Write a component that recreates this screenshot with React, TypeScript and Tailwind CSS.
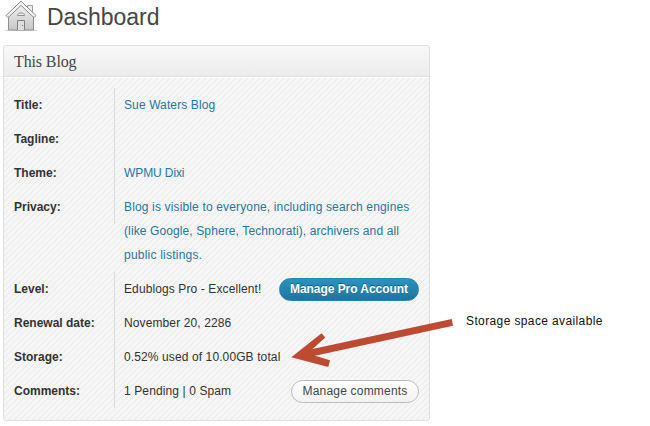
type Row = {
  label: string
  lines: string[]
  tracking?: string
  link?: boolean
  action?: string
  primary?: boolean
}

const rows: Row[] = [
  { label: 'Title:', lines: ['Sue Waters Blog'], link: true },
  { label: 'Tagline:', lines: [], link: true },
  { label: 'Theme:', lines: ['WPMU Dixi'], link: true, tracking: 'tracking-[-0.1px]' },
  {
    label: 'Privacy:',
    lines: [
      'Blog is visible to everyone, including search engines',
      '(like Google, Sphere, Technorati), archivers and all',
      'public listings.',
    ],
    link: true,
    tracking: 'tracking-[0.15px] [&>p:nth-child(2)]:tracking-[0.11px] [&>p:nth-child(3)]:tracking-[0.22px]',
  },
  { label: 'Level:', lines: ['Edublogs Pro - Excellent!'], action: 'Manage Pro Account', primary: true },
  { label: 'Renewal date:', lines: ['November 20, 2286'] },
  { label: 'Storage:', lines: ['0.52% used of 10.00GB total'] },
  { label: 'Comments:', lines: ['1 Pending | 0 Spam'], action: 'Manage comments' },
]

function HouseIcon() {
  return (
    <svg width="32" height="32" viewBox="0 0 32 32" fill="none">
      <defs>
        <linearGradient id="wall" x1="0" y1="0" x2="0" y2="1">
          <stop offset="0" stopColor="#f2f2f2" />
          <stop offset="1" stopColor="#c6c6c6" />
        </linearGradient>
      </defs>
      <path d="M0 30.5h32" stroke="#cfcfcf" />
      <path d="M22.5 10V5.5h5V15" fill="#efefef" stroke="#a0a0a0" />
      <path d="M3.5 15v15h25V15L16 4z" fill="url(#wall)" stroke="#909090" />
      <path d="M16 1.2L1 15.6l2 2L16 5.4l13 12.2 2-2z" fill="#f7f7f7" stroke="#888" strokeLinejoin="round" />
      <path d="M12.5 15.5c0-3.4 7-3.4 7 0z" fill="#eee" stroke="#909090" />
      <path d="M12.5 30V20.5h7V30" fill="#dedede" stroke="#808080" />
      <path d="M17 25.5h1" stroke="#777" />
    </svg>
  )
}

export default function App() {
  return (
    <div className="relative h-[426px] w-[650px] overflow-hidden bg-white font-['Liberation_Sans',sans-serif] text-[12px] text-[#333]">
      <header className="flex h-[45px] items-start pl-[5px]">
        <HouseIcon />
        <h1 className="ml-[10px] mt-[1px] text-[23px] leading-[32px] text-[#464646]">Dashboard</h1>
      </header>

      <section className="ml-[3px] h-[376px] w-[427px] rounded-[3px] border border-[#dfdfdf] bg-[#f6f6f6] bg-[linear-gradient(135deg,#f6f6f6_42%,#e8e8e8_50%,#f6f6f6_58%)] bg-[length:6px_6px]">
        <h2 className="h-[31px] rounded-t-[3px] border-b border-[#dfdfdf] bg-linear-to-b from-[#f9f9f9] to-[#ececec] pl-[10px] font-['Liberation_Serif',serif] text-[16px] leading-[31px] tracking-[-0.12px] text-[#464646] shadow-[0_1px_0_#fff]">
          This Blog
        </h2>
        <div className="mt-[11px] px-[10px]">
          {rows.map((row) => (
            <div key={row.label} className="flex items-start leading-[24px]">
              <div className="w-[101px] shrink-0 border-r border-[#dadada] py-[5px] font-bold">{row.label}</div>
              <div className={`flex min-h-[34px] flex-1 items-center py-[5px] pl-[9px] ${row.link ? 'text-[#2578a6]' : ''}`}>
                <div className={`whitespace-nowrap ${row.tracking ?? 'tracking-[0.11px]'}`}>
                  {row.lines.map((line) => (
                    <p key={line}>{line}</p>
                  ))}
                </div>
                {row.action && (
                  <button
                    className={
                      row.primary
                        ? 'ml-auto h-[23px] w-[140px] rounded-full border border-[#2585b3] bg-linear-to-b from-[#2a92c1] to-[#21759b] text-center font-bold leading-[21px] tracking-[-0.05px] text-white [text-shadow:0_-1px_0_rgba(0,0,0,0.3)]'
                        : 'ml-auto h-[23px] w-[128px] rounded-full border border-[#bbb] bg-linear-to-b from-white to-[#f2f2f2] text-center leading-[21px] tracking-[0.2px] text-[#464646]'
                    }
                  >
                    {row.action}
                  </button>
                )}
              </div>
            </div>
          ))}
        </div>
      </section>

      {/* Callout pointing at the storage row */}
      <svg className="absolute left-0 top-0" width="650" height="426">
        <path
          d="M291.3 357.3L321.5 333.2L325.3 337.5L312.5 349L451.7 319L453 325.8L315 355.8L330 360.3L328.3 367z"
          fill="#be4a31"
        />
      </svg>
      <p className="absolute left-[466px] top-[312px] leading-[18px] tracking-[0.38px] text-[#111]">Storage space available</p>
    </div>
  )
}
